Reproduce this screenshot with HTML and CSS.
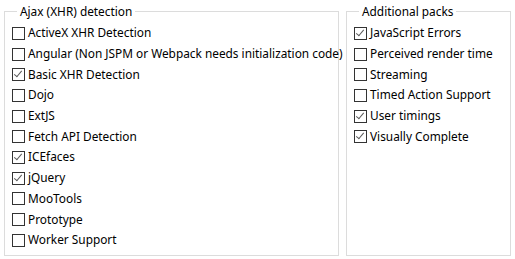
FILE: index.html
```html
<!DOCTYPE html>
<html lang="en">
<head>
  <meta charset="UTF-8">
  <title>Detection settings</title>
  <link rel="stylesheet" href="styles.css">
</head>
<body>
  <div class="panes">
    <fieldset class="group group-ajax">
      <legend>Ajax (XHR) detection</legend>
      <label class="opt"><span class="box"></span>ActiveX XHR Detection</label>
      <label class="opt"><span class="box"></span>Angular (Non JSPM or Webpack needs initialization code)</label>
      <label class="opt on"><span class="box"></span>Basic XHR Detection</label>
      <label class="opt"><span class="box"></span>Dojo</label>
      <label class="opt"><span class="box"></span>ExtJS</label>
      <label class="opt"><span class="box"></span>Fetch API Detection</label>
      <label class="opt on"><span class="box"></span>ICEfaces</label>
      <label class="opt on"><span class="box"></span>jQuery</label>
      <label class="opt"><span class="box"></span>MooTools</label>
      <label class="opt"><span class="box"></span>Prototype</label>
      <label class="opt"><span class="box"></span>Worker Support</label>
    </fieldset>

    <fieldset class="group group-packs">
      <legend>Additional packs</legend>
      <label class="opt on"><span class="box"></span>JavaScript Errors</label>
      <label class="opt"><span class="box"></span>Perceived render time</label>
      <label class="opt"><span class="box"></span>Streaming</label>
      <label class="opt"><span class="box"></span>Timed Action Support</label>
      <label class="opt on"><span class="box"></span>User timings</label>
      <label class="opt on"><span class="box"></span>Visually Complete</label>
    </fieldset>
  </div>
</body>
</html>
```

FILE: styles.css
```css
body {
  margin: 0;
  background: #fff;
  font-family: "Noto Sans", "Open Sans", sans-serif;
  font-size: 11.85px;
  color: #000;
}

.panes {
  display: flex;
  gap: 7px;
  padding: 4px 4px 3px 4px;
  height: 259px;
  box-sizing: border-box;
}

.group {
  margin: 0;
  border: 1px solid #dcdcdc;
  padding: 3px 0 0 7px;
  display: flex;
  flex-direction: column;
  min-width: 0;
}

.group-ajax { width: 335px; box-sizing: border-box; flex: none; }
.group-packs { flex: 1; }

legend {
  padding: 0 3px;
  margin-left: 5px;
  line-height: 15px;
}

.opt {
  display: flex;
  align-items: center;
  height: 20.7px;
  gap: 3px;
  white-space: nowrap;
}

.box {
  width: 11px;
  height: 11px;
  border: 1px solid #333;
  background: #fff;
  position: relative;
  top: 1px;
  flex: none;
}

/* marca do checkbox */
.opt.on .box::after {
  content: "";
  position: absolute;
  left: 3px;
  top: 0px;
  width: 3px;
  height: 7px;
  border-right: 1px solid #5a5a5a;
  border-bottom: 1px solid #5a5a5a;
  transform: rotate(40deg);
}
```
